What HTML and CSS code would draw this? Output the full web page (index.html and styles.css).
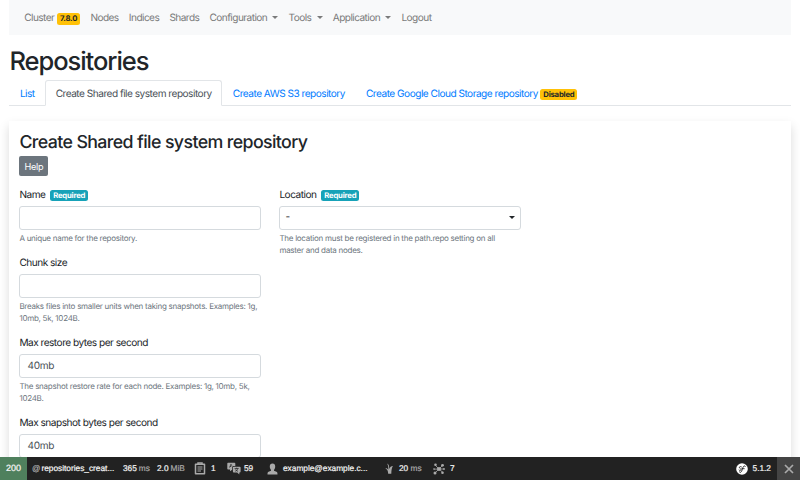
FILE: index.html
```html
<!DOCTYPE html>
<html lang="en">
<head>
<meta charset="utf-8">
<title>Repositories</title>
<link rel="stylesheet" href="styles.css">
</head>
<body>
<div class="page">
  <nav class="navbar">
    <a class="cluster">Cluster <span class="badge warning version">7.8.0</span></a>
    <a>Nodes</a><a>Indices</a><a>Shards</a>
    <a class="dropdown">Configuration</a><a class="dropdown">Tools</a><a class="dropdown">Application</a><a>Logout</a>
  </nav>
  <h1>Repositories</h1>
  <div class="tabs">
    <a class="tab">List</a>
    <a class="tab active">Create Shared file system repository</a>
    <a class="tab">Create AWS S3 repository</a>
    <a class="tab">Create Google Cloud Storage repository <span class="badge warning">Disabled</span></a>
  </div>
  <main class="card">
    <h2>Create Shared file system repository</h2>
    <button class="help">Help</button>
    <form class="columns">
      <div class="column">
        <div class="group">
          <label>Name <span class="badge info">Required</span></label>
          <div class="control"></div>
          <small>A unique name for the repository.</small>
        </div>
        <div class="group">
          <label>Chunk size</label>
          <div class="control"></div>
          <small>Breaks files into smaller units when taking snapshots. Examples: 1g,<br>10mb, 5k, 1024B.</small>
        </div>
        <div class="group">
          <label>Max restore bytes per second</label>
          <div class="control">40mb</div>
          <small>The snapshot restore rate for each node. Examples: 1g, 10mb, 5k,<br>1024B.</small>
        </div>
        <div class="group">
          <label>Max snapshot bytes per second</label>
          <div class="control">40mb</div>
        </div>
      </div>
      <div class="column">
        <div class="group">
          <label>Location <span class="badge info">Required</span></label>
          <div class="control select">-</div>
          <small>The location must be registered in the path.repo setting on all<br>master and data nodes.</small>
        </div>
      </div>
    </form>
  </main>
</div>
<footer class="toolbar">
  <div class="status">200</div>
  <div class="item route"><i>@</i> repositories_creat...</div>
  <div class="item time">365 <i>ms</i></div>
  <div class="item memory">2.0 <i>MiB</i></div>
  <div class="item forms">
    <svg width="12" height="13" viewBox="0 0 12 13" fill="none" stroke="#aaa"><path d="M1.500 2.200h9v9.600h-9z" stroke-width="1.500" stroke-linejoin="round"/><path d="M4 2.200V1h4v1.200" stroke-width="1.500"/><path d="M3.500 5h5M3.500 7h5M3.500 9h3.500"/></svg>1</div>
  <div class="item translations">
    <svg width="14" height="13" viewBox="0 0 14 13"><path d="M1 .8h6.500q.8 0 .8.800V4H6.500q-1.300 0-1.300 1.300v2.500L3 9.200V7.500H1Q.3 7.500.3 6.700V1.600Q.3.800 1 .8z" fill="#aaa"/><path d="M6.700 4.700h6q.9 0 .9.900v4q0 .9-.9.900h-.4v1.900l-2.100-1.900H6.700q-.8 0-.8-.9v-4q0-.9.800-.9z" fill="#aaa"/><path d="M2.500 5.500 4 2.200l.8 1.600M3 4.500h1.300M7.600 6.500h4M9.600 5.700v.8M8.200 9.300q2.200-.9 2.600-2.800M8.500 7.500q.8 1.400 2.500 1.800" stroke="#222" stroke-width=".7" fill="none"/></svg>59</div>
  <div class="item user">
    <svg width="11" height="12" viewBox="0 0 11 12" fill="#aaa"><path d="M5.500.5C3.700.5 2.800 1.700 2.800 3.500c0 1.300.4 2.600 1.200 3.300v.9L1.600 8.800C.8 9.200.5 9.700.5 11.500h10c0-1.800-.3-2.300-1.100-2.700L7 7.700v-.9c.8-.7 1.200-2 1.200-3.300 0-1.800-.9-3-2.700-3z"/></svg>example@example.c...</div>
  <div class="item twig">
    <svg width="9" height="13" viewBox="0 0 9 13" fill="#aaa"><path d="M2 1.500C4 2.300 4.300 4.500 4.300 7 5 5.200 6 4.100 8 4 6.800 5.500 6.400 8 6.300 11.700H3.200C3 8.800 2.400 7.400.3 6.200c1.700-.1 2.500.6 3 1.500C3.400 5 3.200 3.100 2 1.500z"/></svg><span>20 <i>ms</i></span></div>
  <div class="item search">
    <svg width="12" height="12" viewBox="0 0 12 12" fill="#aaa"><path d="M2 2l4 4 4-4M2 10l4-4 4 3.500M6 6 .8 6.200M6 6h5" stroke="#aaa" stroke-width=".8" fill="none"/><circle cx="6" cy="6" r="2"/><circle cx="2.500" cy="1.800" r="1.300"/><circle cx="9.500" cy="2.300" r="1.400"/><circle cx="2" cy="10" r="1.500"/><circle cx="9.500" cy="9.800" r="1.300"/><circle cx="1" cy="6" r=".8"/><circle cx="11" cy="6" r=".9"/></svg>7</div>
  <div class="item symfony">
    <svg width="12" height="12" viewBox="0 0 12 12"><circle cx="6" cy="6" r="5.800" fill="#fff"/><path d="M9.300 3.600c.2-.8-1.100-1-1.800-.2C6.300 4.800 6.200 8.900 4.600 9.400c-.8.200-1.300-.3-1-.7M5.400 3.800C4.200 3 2.900 4 3.500 4.900c.5.700 1.700.9 1.500 1.900-.2.800-1.600.9-2 .3M5.800 5.700h2.400" fill="none" stroke="#222" stroke-width=".9" stroke-linecap="round"/></svg>5.1.2</div>
  <div class="close"><svg width="10" height="10" viewBox="0 0 10 10"><path d="M1 1l8 8M9 1L1 9" stroke="#aaa" stroke-width="1.700"/></svg></div>
</footer>
</body>
</html>
```
FILE: styles.css
```css
* { box-sizing: border-box; }
body { margin: 0; height: 480px; overflow: hidden; background: #fff; color: #212529; font: 10.1px/15.6px Inter, sans-serif; letter-spacing: -.5px; text-rendering: geometricPrecision; }
.page { padding: 0 9.400px; height: 480px; overflow: hidden; }
.navbar { height: 35px; background: #f8f9fa; display: flex; align-items: center; padding: 2.600px 0 0 14.800px; gap: 10.200px; color: #7a7b7b; white-space: nowrap; letter-spacing: -.56px; }
.cluster { display: flex; align-items: center; gap: 2.700px; }
.dropdown::after, .select::after { content: ""; display: inline-block; border: 3px solid transparent; border-top-color: currentColor; border-bottom: 0; margin-left: 5.200px; vertical-align: 2.500px; }
.badge { display: inline-block; height: 11.500px; padding: 0 3px; border-radius: 2.500px; font-size: 7.700px; line-height: 12px; font-weight: 700; letter-spacing: -.2px; vertical-align: 0; }
.warning { background: #ffc107; color: #212529; }
.version { margin-top: 0; }
.info { background: #17a2b8; color: #fff; margin-left: 2.500px; }
h1 { font-size: 25.500px; line-height: 31px; font-weight: 500; letter-spacing: -1.050px; margin: 10.600px 0 3.400px; }
.tabs { display: flex; height: 26px; border-bottom: 1px solid #e2e5e8; color: #007bff; white-space: nowrap; }
.tab { height: 26px; padding: 5.700px 9.500px 0; border: 1px solid transparent; }
.active { color: #495057; background: #fff; border-color: #e2e5e8 #e2e5e8 #fff; border-radius: 3px 3px 0 0; }
.card { height: 500px; margin-top: 15px; padding: 11px 10px 10px; box-shadow: 0 5px 10px rgba(0,0,0,.15); }
h2 { font-size: 17.800px; line-height: 22px; font-weight: 500; letter-spacing: -.62px; margin: 0 0 2.500px; }
.help { display: block; width: 29px; height: 20px; padding: 0; border: 0; border-radius: 2px; background: #6c757d; color: #fff; font: 9.100px Inter, sans-serif; letter-spacing: -.3px; }
.columns { display: flex; gap: 18px; margin-top: 10.500px; }
.column { width: 242px; }
.group { margin-bottom: 11px; }
label { display: block; line-height: 16px; margin-bottom: 3px; white-space: nowrap; }
.control { height: 24px; border: 1px solid #d5dade; border-radius: 3px; padding: 0 7px; line-height: 23.500px; color: #495057; letter-spacing: -.25px; }
.select { display: flex; align-items: center; justify-content: space-between; padding: 0 5px; color: #212529; }
small { display: block; margin-top: 2px; font-size: 8px; line-height: 12px; letter-spacing: -.26px; color: #6c757d; white-space: nowrap; }
.toolbar { position: fixed; left: 0; right: 0; bottom: 0; height: 23px; background: #222; display: flex; color: #f5f5f5; font: 500 8.300px/23px "Liberation Sans", sans-serif; letter-spacing: 0; white-space: nowrap; }
.toolbar i { font-style: normal; font-weight: 400; color: #aaa; }
.status { width: 27px; background: #4f805d; text-align: center; font-size: 9px; -webkit-text-stroke: .2px; }
.item { display: flex; align-items: center; gap: 2px; flex: none; -webkit-text-stroke: .2px; }
.route { width: 96px; padding-left: 5px; gap: 1px; }
.time { width: 34px; }
.memory { width: 37px; }
.forms { width: 33px; gap: 5px; }
.translations { width: 40px; gap: 3px; }
.user { width: 118px; gap: 5px; }
.twig { width: 48px; gap: 5px; }
.search { width: 40px; gap: 5px; }
.symfony { margin-left: auto; margin-right: 6px; gap: 5px; }
.close { width: 23px; background: #444; display: flex; align-items: center; justify-content: center; }
```
